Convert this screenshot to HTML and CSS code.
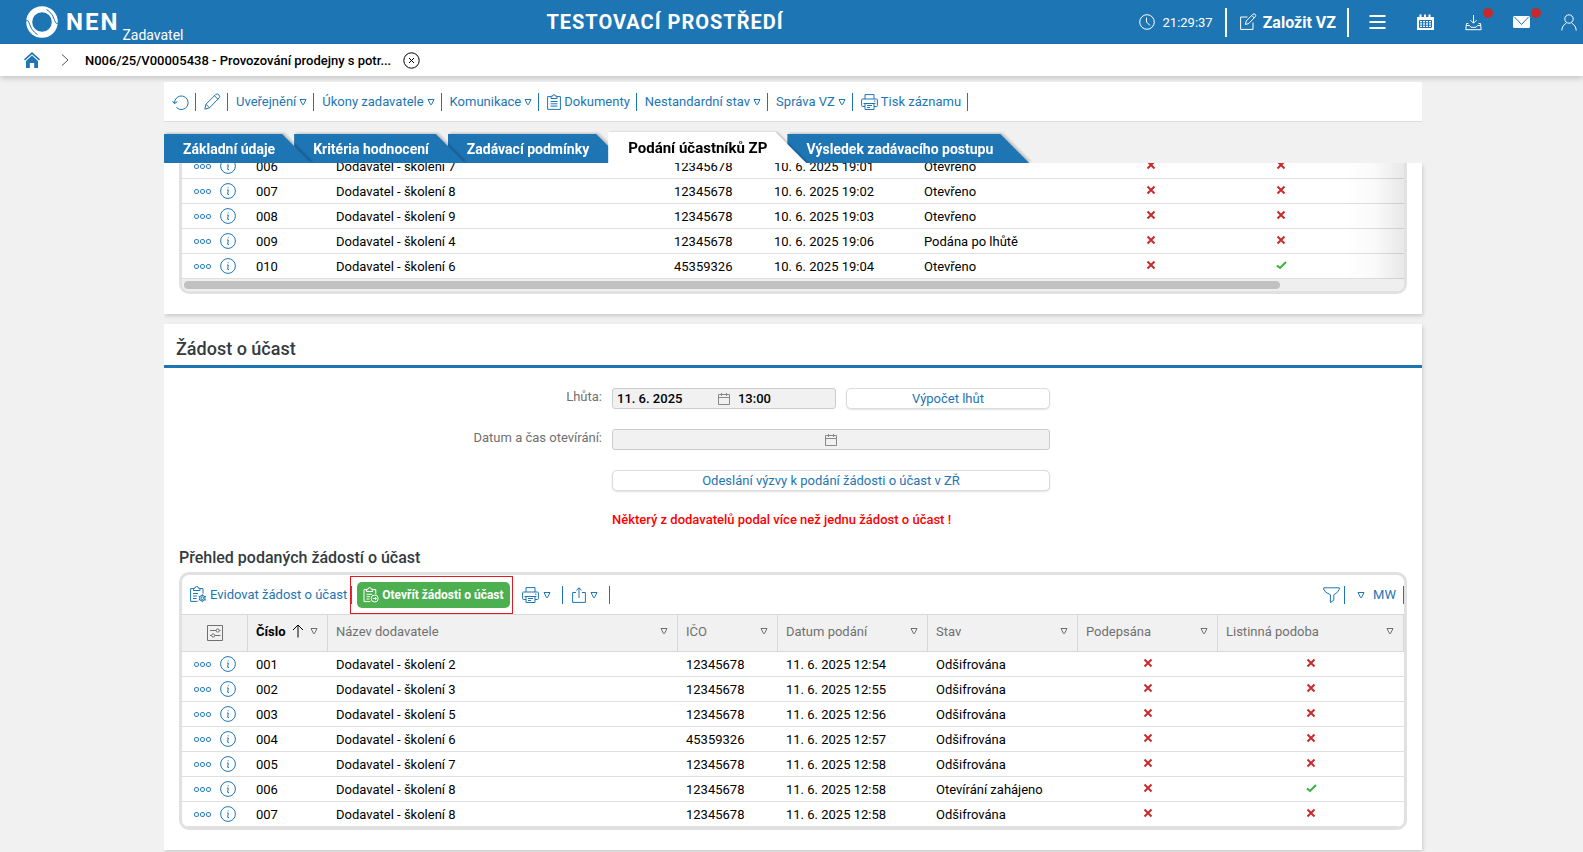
FILE: index.html
```html
<!DOCTYPE html>
<html lang="cs">
<head>
  <meta charset="UTF-8">
  <meta name="viewport" content="width=device-width, initial-scale=1.0">
  <title>NEN - Podání účastníků ZP</title>
  <link rel="stylesheet" href="styles.css">
</head>
<body>
  <!-- icons -->
  <svg class="sprite" aria-hidden="true">
    <symbol id="tri" viewBox="0 0 8 8"><path d="M1 1.500h6L4.500 6.500h-1z"/></symbol>
    <symbol id="dots" viewBox="0 0 17 5"><rect x=".6" y=".6" width="3.800" height="3.800" rx="1.200"/><rect x="6.600" y=".6" width="3.800" height="3.800" rx="1.200"/><rect x="12.600" y=".6" width="3.800" height="3.800" rx="1.200"/></symbol>
    <symbol id="info" viewBox="0 0 16 16"><circle cx="8" cy="8" r="7.4"/><path d="M7 7h1.3L7.6 11.2q.1.8 1.4.1M8.2 4.3v1"/></symbol>
    <symbol id="no" viewBox="0 0 10 10"><path d="M1.5 1.5l7 7M8.5 1.5l-7 7"/></symbol>
    <symbol id="yes" viewBox="0 0 11 10"><path d="M1 5.4l3 2.6 6-6"/></symbol>
    <symbol id="print" viewBox="0 0 17 16"><path d="M4 5V.6h9V5M4 12.500H1.600Q.6 12.500.6 11.500V6q0-1 1-1h13.800q1 0 1 1v5.500q0 1-1 1H13M4 9.500h9v6H4zM2.500 9.500h12M6 11.500h5M6 13.500h3M13 7.200h1.500"/></symbol>
    <symbol id="clip" viewBox="0 0 14 16"><path d="M4 2.600H.6v12.800h12.800V2.600H10M4 4.500V2.200h1.500a1.500 1.500 0 0 1 3 0H10v2.300zM3.500 7.500h7M3.500 9.800h7M3.500 12.100h7"/></symbol>
    <symbol id="cal" viewBox="0 0 12 12"><path d="M.5 1.500h11v10H.5zM.5 4.500h11M3.500 0v3M8.500 0v3"/></symbol>
  </svg>

  <header class="topbar">
    <a class="brand" href="#">
      <svg class="brand-mark" viewBox="0 0 32 32" aria-hidden="true">
        <circle class="ring" cx="16" cy="16" r="12.800"/>
        <path class="swoosh" d="M0 15C4 12 2 23 11.500 28.500M32 17C28 20 30 9 20.500 3.500"/>
      </svg>
      <span class="brand-name">NEN</span>
      <span class="brand-role">Zadavatel</span>
    </a>
    <div class="env">TESTOVACÍ PROSTŘEDÍ</div>
    <nav class="top-actions">
      <span class="clock">
        <svg width="16" height="16" viewBox="0 0 16 16"><circle cx="8" cy="8" r="7.300"/><path d="M7.500 3.500V8l3.500 3.500"/></svg>
        21:29:37
      </span>
      <a class="create" href="#">
        <svg width="18" height="18" viewBox="0 0 18 18"><path d="M8.500 4H1.600v12.400H14V9.500M6.500 11.500L7.200 8 14 1.200q1.200-.8 2.200.2t.2 2.200L9.800 10.500zM12.800 2.500l2.500 2.500"/></svg>
        Založit VZ
      </a>
      <button class="top-btn" aria-label="Menu"><svg width="17" height="16" viewBox="0 0 17 16"><path class="bars" d="M.500 2h16M.500 8h16M.500 14h16"/></svg></button>
      <button class="top-btn" aria-label="Kalendář"><svg width="17" height="17" viewBox="0 0 17 17"><path class="solid" d="M0 3h2.500V.5h2V3h2.500V.5h2V3h2.500V.5h2V3H17v13H0z"/><path class="grid" d="M2.500 6.500h12v7h-12zM2.500 8.800h12M2.500 11.200h12M5.500 6.500v7M8.500 6.500v7M11.500 6.500v7"/></svg></button>
      <button class="top-btn" aria-label="Stahování"><svg width="17" height="17" viewBox="0 0 17 17"><path d="M8.500 1v8M5.500 6.200l3 3 3-3M3.500 9.500H1.500L.8 15.700h15.400L15.500 9.500h-2M1 11.500h3.500L6 13.300h5l1.500-1.800H16"/></svg><i class="dot"></i></button>
      <button class="top-btn" aria-label="Zprávy"><svg width="17" height="12" viewBox="0 0 17 12"><rect class="solid" width="17" height="12" rx="1.500"/><path class="grid" d="M1.500 1l7 7.500 7-7.500"/></svg><i class="dot"></i></button>
      <button class="top-btn" aria-label="Uživatel"><svg width="16" height="17" viewBox="0 0 16 17"><circle cx="8" cy="5" r="4.200"/><path d="M.800 16.500q.2-5 4.500-7.300M15.200 16.500q-.2-5-4.500-7.300"/></svg></button>
    </nav>
  </header>

  <nav class="crumbs">
    <a href="#" aria-label="Domů"><svg width="16" height="16" viewBox="0 0 16 16"><path d="M8 0l8 7.300-1 1.100L8 2.200 1 8.400 0 7.300z"/><path d="M8 3.600l6 5.300V16h-3.800v-5H5.800v5H2V8.900z"/></svg></a>
    <svg class="chevron" width="8" height="12" viewBox="0 0 8 12"><path d="M1 .5L7 6l-6 5.500"/></svg>
    <span class="crumb">N006/25/V00005438 - Provozování prodejny s potr...</span>
    <button class="crumb-close" aria-label="Zavřít"><svg width="17" height="17" viewBox="0 0 17 17"><circle cx="8.500" cy="8.500" r="7.700"/><path d="M6 6l5 5M11 6l-5 5"/></svg></button>
  </nav>

  <main class="page">
    <div class="toolbar">
      <button class="tool" aria-label="Obnovit"><svg class="ico" width="17" height="16" viewBox="0 0 17 16"><path d="M2.600 9.500a6.800 6.800 0 1 1 1.900 4M.500 7l2 2.700L5.300 7.500"/></svg></button>
      <button class="tool" aria-label="Upravit"><svg class="ico" width="17" height="17" viewBox="0 0 17 17"><path d="M.800 16.200l1.200-5L11.800 1.400q1.400-1.200 3 .4t.4 3L5.500 14.800zM10.500 2.800l3.600 3.600M2 11.200l3.500 3.600"/></svg></button>
      <button class="tool">Uveřejnění <svg class="ico tri"><use href="#tri"/></svg></button>
      <button class="tool">Úkony zadavatele <svg class="ico tri"><use href="#tri"/></svg></button>
      <button class="tool">Komunikace <svg class="ico tri"><use href="#tri"/></svg></button>
      <button class="tool"><svg class="ico" width="14" height="16"><use href="#clip"/></svg> Dokumenty</button>
      <button class="tool">Nestandardní stav <svg class="ico tri"><use href="#tri"/></svg></button>
      <button class="tool">Správa VZ <svg class="ico tri"><use href="#tri"/></svg></button>
      <button class="tool"><svg class="ico" width="17" height="16"><use href="#print"/></svg> Tisk záznamu</button>
    </div>

    <nav class="tabs">
      <a class="tab" href="#"><span>Základní údaje</span></a>
      <a class="tab" href="#"><span>Kritéria hodnocení</span></a>
      <a class="tab" href="#"><span>Zadávací podmínky</span></a>
      <a class="tab active" href="#"><span>Podání účastníků ZP</span></a>
      <a class="tab" href="#"><span>Výsledek zadávacího postupu</span></a>
    </nav>

    <div class="content">
      <section class="panel scrolled">
        <div class="frame">
          <table class="data wide">
            <colgroup><col class="c-act"><col class="c-num"><col><col class="c-ico"><col class="c-date"><col class="c-state"><col class="c-flag"><col class="c-flag"><col class="c-rest"></colgroup>
            <tbody>
              <tr><td class="act"><svg class="ico dots"><use href="#dots"/></svg><svg class="ico info"><use href="#info"/></svg></td><td>006</td><td>Dodavatel - školení 7</td><td>12345678</td><td>10. 6. 2025 19:01</td><td>Otevřeno</td><td class="flag"><svg class="no"><use href="#no"/></svg></td><td class="flag"><svg class="no"><use href="#no"/></svg></td><td></td></tr>
              <tr><td class="act"><svg class="ico dots"><use href="#dots"/></svg><svg class="ico info"><use href="#info"/></svg></td><td>007</td><td>Dodavatel - školení 8</td><td>12345678</td><td>10. 6. 2025 19:02</td><td>Otevřeno</td><td class="flag"><svg class="no"><use href="#no"/></svg></td><td class="flag"><svg class="no"><use href="#no"/></svg></td><td></td></tr>
              <tr><td class="act"><svg class="ico dots"><use href="#dots"/></svg><svg class="ico info"><use href="#info"/></svg></td><td>008</td><td>Dodavatel - školení 9</td><td>12345678</td><td>10. 6. 2025 19:03</td><td>Otevřeno</td><td class="flag"><svg class="no"><use href="#no"/></svg></td><td class="flag"><svg class="no"><use href="#no"/></svg></td><td></td></tr>
              <tr><td class="act"><svg class="ico dots"><use href="#dots"/></svg><svg class="ico info"><use href="#info"/></svg></td><td>009</td><td>Dodavatel - školení 4</td><td>12345678</td><td>10. 6. 2025 19:06</td><td>Podána po lhůtě</td><td class="flag"><svg class="no"><use href="#no"/></svg></td><td class="flag"><svg class="no"><use href="#no"/></svg></td><td></td></tr>
              <tr><td class="act"><svg class="ico dots"><use href="#dots"/></svg><svg class="ico info"><use href="#info"/></svg></td><td>010</td><td>Dodavatel - školení 6</td><td>45359326</td><td>10. 6. 2025 19:04</td><td>Otevřeno</td><td class="flag"><svg class="no"><use href="#no"/></svg></td><td class="flag"><svg class="yes"><use href="#yes"/></svg></td><td></td></tr>
            </tbody>
          </table>
          <div class="fade"></div>
          <div class="hscroll"><div class="thumb"></div></div>
        </div>
      </section>

      <section class="panel">
        <h2>Žádost o účast</h2>
        <form class="form">
          <label for="deadline">Lhůta:</label>
          <div class="pair">
            <div class="datetime">
              <input id="deadline" type="text" value="11. 6. 2025" readonly>
              <svg class="cal"><use href="#cal"/></svg>
              <input type="text" value="13:00" aria-label="Čas lhůty" readonly>
            </div>
            <button type="button" class="btn">Výpočet lhůt</button>
          </div>

          <label for="opening">Datum a čas otevírání:</label>
          <div class="datetime">
            <input id="opening" type="text" readonly>
            <svg class="cal"><use href="#cal"/></svg>
            <input type="text" aria-label="Čas otevírání" readonly>
          </div>

          <button type="button" class="btn second">Odeslání výzvy k podání žádosti o účast v ZŘ</button>
          <p class="warning second">Některý z dodavatelů podal více než jednu žádost o účast !</p>
        </form>

        <h3>Přehled podaných žádostí o účast</h3>
        <div class="frame">
          <div class="table-tools">
            <button class="tool"><svg class="ico" width="17" height="17" viewBox="0 0 17 17"><path d="M3.500 2.600H.6v12.800h7M10 2.600h3v5M3.500 4.500V2.200H5a1.700 1.700 0 0 1 3.400 0H10v2.300zM3 7.500h5M3 10h4M3 12.500h3.500"/><circle cx="12.300" cy="12.200" r="1.400"/><path d="M12.300 8.200v1.400M12.300 14.800v1.400M8.600 10.200l1.400.8M14.600 13.400l1.500.8M8.600 14.200l1.400-.8M14.600 11l1.500-.8"/><circle cx="12.300" cy="12.200" r="2.800"/></svg> Evidovat žádost o účast</button>
            <div class="marked">
              <button class="open-btn"><svg width="16" height="16" viewBox="0 0 16 16"><path d="M3.500 2.600H1v12h6.500M9.500 2.600h3.300v4.600M3.500 4.500V2.200H5a1.600 1.600 0 0 1 3.200 0h1.500v2.300zM3.500 7.300h5.500M3.500 9.700h3.500M3.500 12h3"/><circle cx="11.700" cy="11.500" r="3.500"/><path d="M9.800 11.500h3.500M12 9.900l1.600 1.600-1.600 1.600"/></svg> Otevřít žádosti o účast</button>
            </div>
            <button class="tool" aria-label="Tisk"><svg class="ico" width="17" height="16"><use href="#print"/></svg><svg class="ico tri"><use href="#tri"/></svg></button>
            <button class="tool" aria-label="Export"><svg class="ico" width="14" height="16" viewBox="0 0 14 16"><path d="M4 5.500H.6v9.900h12.800V5.500H10M7 11V.800M4.300 3.500L7 .8l2.700 2.700"/></svg><svg class="ico tri"><use href="#tri"/></svg></button>
            <div class="tools-right">
              <button class="tool" aria-label="Filtr"><svg class="ico" width="17" height="16" viewBox="0 0 17 16"><path d="M.700.8h15.600v1.500q-1 3.200-5.500 5.500v5.400l-3.400 2.300V7.800Q1.700 5.500.7 2.300z"/></svg></button>
              <button class="tool view"><svg class="ico tri"><use href="#tri"/></svg> MW</button>
            </div>
          </div>
          <table class="data">
            <colgroup><col class="c-act"><col class="c-num"><col><col class="c-ico"><col class="c-date"><col class="c-date"><col class="c-sign"><col class="c-form"></colgroup>
            <thead>
              <tr>
                <th class="settings"><svg width="16" height="16" viewBox="0 0 16 16"><path d="M.500.5h15v15H.5zM3 5.500h6M12.500 5.500h1M3 10.500h1.500M8 10.500h5.500"/><circle cx="10.700" cy="5.500" r="1.600"/><circle cx="6.200" cy="10.500" r="1.600"/></svg></th>
                <th class="sorted"><div>Číslo <svg class="arrow" width="12" height="14" viewBox="0 0 12 14"><path d="M6 13.500V1M1 6l5-5 5 5"/></svg><svg class="tri"><use href="#tri"/></svg></div></th>
                <th><div>Název dodavatele <svg class="tri"><use href="#tri"/></svg></div></th>
                <th><div>IČO <svg class="tri"><use href="#tri"/></svg></div></th>
                <th><div>Datum podání <svg class="tri"><use href="#tri"/></svg></div></th>
                <th><div>Stav <svg class="tri"><use href="#tri"/></svg></div></th>
                <th><div>Podepsána <svg class="tri"><use href="#tri"/></svg></div></th>
                <th><div>Listinná podoba <svg class="tri"><use href="#tri"/></svg></div></th>
              </tr>
            </thead>
            <tbody>
              <tr><td class="act"><svg class="ico dots"><use href="#dots"/></svg><svg class="ico info"><use href="#info"/></svg></td><td>001</td><td>Dodavatel - školení 2</td><td>12345678</td><td>11. 6. 2025 12:54</td><td>Odšifrována</td><td class="flag"><svg class="no"><use href="#no"/></svg></td><td class="flag"><svg class="no"><use href="#no"/></svg></td></tr>
              <tr><td class="act"><svg class="ico dots"><use href="#dots"/></svg><svg class="ico info"><use href="#info"/></svg></td><td>002</td><td>Dodavatel - školení 3</td><td>12345678</td><td>11. 6. 2025 12:55</td><td>Odšifrována</td><td class="flag"><svg class="no"><use href="#no"/></svg></td><td class="flag"><svg class="no"><use href="#no"/></svg></td></tr>
              <tr><td class="act"><svg class="ico dots"><use href="#dots"/></svg><svg class="ico info"><use href="#info"/></svg></td><td>003</td><td>Dodavatel - školení 5</td><td>12345678</td><td>11. 6. 2025 12:56</td><td>Odšifrována</td><td class="flag"><svg class="no"><use href="#no"/></svg></td><td class="flag"><svg class="no"><use href="#no"/></svg></td></tr>
              <tr><td class="act"><svg class="ico dots"><use href="#dots"/></svg><svg class="ico info"><use href="#info"/></svg></td><td>004</td><td>Dodavatel - školení 6</td><td>45359326</td><td>11. 6. 2025 12:57</td><td>Odšifrována</td><td class="flag"><svg class="no"><use href="#no"/></svg></td><td class="flag"><svg class="no"><use href="#no"/></svg></td></tr>
              <tr><td class="act"><svg class="ico dots"><use href="#dots"/></svg><svg class="ico info"><use href="#info"/></svg></td><td>005</td><td>Dodavatel - školení 7</td><td>12345678</td><td>11. 6. 2025 12:58</td><td>Odšifrována</td><td class="flag"><svg class="no"><use href="#no"/></svg></td><td class="flag"><svg class="no"><use href="#no"/></svg></td></tr>
              <tr><td class="act"><svg class="ico dots"><use href="#dots"/></svg><svg class="ico info"><use href="#info"/></svg></td><td>006</td><td>Dodavatel - školení 8</td><td>12345678</td><td>11. 6. 2025 12:58</td><td>Otevírání zahájeno</td><td class="flag"><svg class="no"><use href="#no"/></svg></td><td class="flag"><svg class="yes"><use href="#yes"/></svg></td></tr>
              <tr><td class="act"><svg class="ico dots"><use href="#dots"/></svg><svg class="ico info"><use href="#info"/></svg></td><td>007</td><td>Dodavatel - školení 8</td><td>12345678</td><td>11. 6. 2025 12:58</td><td>Odšifrována</td><td class="flag"><svg class="no"><use href="#no"/></svg></td><td class="flag"><svg class="no"><use href="#no"/></svg></td></tr>
            </tbody>
          </table>
        </div>
      </section>
    </div>
  </main>
</body>
</html>
```
FILE: styles.css
```css
* {
  box-sizing: border-box;
}

body {
  margin: 0;
  height: 100vh;
  display: flex;
  flex-direction: column;
  overflow: hidden;
  font-family: Roboto, sans-serif;
  font-size: 13px;
  color: #000;
  background: #f1f1f1;
}

button {
  font: inherit;
  padding: 0;
  border: none;
  background: none;
  cursor: pointer;
}

a {
  color: inherit;
  text-decoration: none;
}

svg {
  fill: none;
  stroke: currentColor;
  flex: none;
}

.sprite {
  display: none;
}

.ico {
  color: #1e75b4;
}

.tri {
  width: 8px;
  height: 8px;
}

/* top bar */
.topbar {
  flex: none;
  display: flex;
  justify-content: space-between;
  align-items: center;
  height: 44px;
  padding: 0 2px 0 26px;
  color: #fff;
  background: #1e75b4;
}

.brand {
  display: flex;
  align-items: center;
  height: 44px;
  margin-right: 8px;
}

.brand-mark {
  width: 32px;
  height: 32px;
  margin-right: 8px;
}

.brand-mark .ring {
  stroke-width: 6;
}

.brand-mark .swoosh {
  stroke: #1e75b4;
}

.brand-name {
  font-size: 24px;
  font-weight: 700;
  letter-spacing: 2px;
}

.brand-role {
  align-self: flex-end;
  margin: 0 0 1px 3px;
  font-size: 14px;
  line-height: 16px;
}

.env {
  font-size: 20px;
  font-weight: 700;
  letter-spacing: 1px;
}

.top-actions {
  display: flex;
  align-items: center;
}

.clock {
  display: flex;
  align-items: center;
  gap: 8px;
  padding-right: 12px;
}

.create {
  display: flex;
  align-items: center;
  gap: 6px;
  height: 29px;
  padding: 0 11px 0 12px;
  font-size: 16px;
  font-weight: 700;
  border-left: 2px solid #fff;
  border-right: 2px solid #fff;
  margin-right: 4px;
}

.top-btn {
  position: relative;
  display: flex;
  align-items: center;
  justify-content: center;
  width: 48px;
  height: 44px;
  color: #fff;
}

.top-btn:last-child {
  width: 32px;
  margin-left: 4px;
  padding-left: 8px;
}

.top-btn .bars {
  stroke-width: 2;
}

.top-btn .solid {
  fill: #fff;
  stroke: none;
}

.top-btn .grid {
  stroke: #1e75b4;
}

.dot {
  position: absolute;
  top: 8px;
  right: 4px;
  width: 10px;
  height: 10px;
  border-radius: 50%;
  background: #c9292c;
}

/* breadcrumbs */
.crumbs {
  flex: none;
  display: flex;
  align-items: center;
  height: 32px;
  padding: 0 24px;
  background: #fff;
  box-shadow: 0 2px 6px rgba(0, 0, 0, 0.2);
}

.crumbs a svg {
  display: block;
  fill: #1e75b4;
  stroke: none;
}

.chevron {
  margin: 0 16px 0 21px;
  color: #555;
}

.crumb {
  font-weight: 500;
}

.crumb-close {
  margin-left: 12px;
  height: 17px;
}

/* page */
.page {
  flex: 1;
  min-height: 0;
  display: flex;
  flex-direction: column;
  padding: 6px 161px 0 164px;
}

.toolbar {
  flex: none;
  display: flex;
  align-items: center;
  height: 40px;
  background: #fff;
  border-bottom: 1px solid #dcdcdc;
}

.tool {
  display: flex;
  align-items: center;
  gap: 3px;
  height: 18px;
  padding: 0 6px 0 8px;
  color: #1e75b4;
  border-right: 1px solid #1e75b4;
}

/* tabs */
.tabs {
  flex: none;
  display: flex;
  align-items: flex-end;
  height: 41px;
}

.tab {
  position: relative;
  margin-right: -17px;
  font-size: 14px;
  font-weight: 700;
  color: #fff;
  filter: drop-shadow(2px -1px 1px rgba(0, 0, 0, 0.2));
}

.tab span {
  display: block;
  height: 29px;
  padding: 0 36px 0 19px;
  line-height: 30px;
  background: #1e75b4;
  clip-path: polygon(0 0, calc(100% - 29px) 0, 100% 100%, 0 100%);
}

.tab:nth-child(1) { z-index: 3; }
.tab:nth-child(2) { z-index: 2; }
.tab:nth-child(3) { z-index: 1; }

.tab.active {
  z-index: 4;
  margin-right: -19px;
  font-size: 15px;
  color: #000;
  filter: drop-shadow(2px 0 1px rgba(0, 0, 0, 0.2));
}

.tab.active span {
  height: 31px;
  padding: 0 39px 0 20px;
  line-height: 32px;
  background: #fff;
  clip-path: polygon(0 0, calc(100% - 31px) 0, 100% 100%, 0 100%);
}

/* panels */
.content {
  flex: 1;
  min-height: 0;
  margin-right: -8px;
  padding-right: 8px;
  overflow: hidden;
  position: relative;
  z-index: 5;
}

.panel {
  margin-bottom: 10px;
  padding-bottom: 20px;
  background: #fff;
  box-shadow: 1px 2px 4px rgba(0, 0, 0, 0.16);
}

.panel.scrolled .frame {
  border-top: none;
  border-radius: 0 0 10px 10px;
}

.panel.scrolled .data {
  margin-top: -9px;
}

.frame {
  position: relative;
  margin: 0 15px;
  border: 3px solid #dfe1e3;
  border-radius: 10px;
  overflow: hidden;
}

.fade {
  position: absolute;
  top: 0;
  right: 0;
  bottom: 12px;
  width: 60px;
  background: linear-gradient(to right, rgba(0, 0, 0, 0), rgba(0, 0, 0, 0.02) 50%, rgba(0, 0, 0, 0.09));
}

.hscroll {
  height: 12px;
  padding: 2px;
  background: #efefef;
}

.thumb {
  width: 90%;
  height: 8px;
  border-radius: 4px;
  background: #c1c1c1;
}

h2 {
  height: 44px;
  margin: 0;
  padding: 5px 12px 0;
  font-size: 18px;
  font-weight: 500;
  line-height: 40px;
  color: #333b41;
  border-bottom: 3px solid #1e75b4;
}

h3 {
  margin: 19px 15px 4px;
  font-size: 16px;
  font-weight: 500;
  line-height: 20px;
  color: #333b41;
}

/* form */
.form {
  display: grid;
  grid-template-columns: 438fr 438fr 362fr;
  gap: 20px 10px;
  padding-top: 20px;
}

.form label {
  grid-column: 1;
  text-align: right;
  line-height: 18px;
  color: #707070;
}

.second {
  grid-column: 2;
}

.pair {
  display: flex;
  gap: 10px;
}

.pair .datetime {
  flex: 224;
}

.pair .btn {
  flex: 204;
}

.datetime {
  display: flex;
  align-items: center;
  min-width: 0;
  height: 21px;
  background: #f1f1f1;
  border: 1px solid #ccc;
  border-radius: 3px;
}

.datetime input {
  flex: 1;
  min-width: 0;
  height: 19px;
  padding: 0 4px;
  font: inherit;
  font-weight: 500;
  border: none;
  outline: none;
  background: transparent;
}

.datetime .cal + input {
  padding: 0 0 0 8px;
}

.cal {
  width: 12px;
  height: 12px;
  color: #888;
}

.btn {
  height: 21px;
  color: #1e75b4;
  background: #fff;
  border: 1px solid #dcdcdc;
  border-radius: 5px;
  box-shadow: 0 1px 2px rgba(0, 0, 0, 0.12);
}

.warning {
  margin: 0;
  font-weight: 500;
  line-height: 18px;
  color: #f00;
}

/* table tools */
.table-tools {
  display: flex;
  align-items: center;
  height: 39px;
}

.table-tools .tool:first-child {
  padding-right: 4px;
}

.marked {
  display: flex;
  height: 38px;
  margin-left: -2px;
  padding: 5px 2px 5px 6px;
  border: 1px solid #e11b22;
}

.marked + .tool,
.marked + .tool + .tool {
  gap: 4px;
  padding: 0 11px 0 9px;
}

.open-btn {
  display: flex;
  align-items: center;
  gap: 3px;
  height: 26px;
  padding: 0 6px;
  font-size: 12px;
  font-weight: 700;
  color: #fff;
  background: #4caf50;
  border-radius: 5px;
}

.tools-right {
  display: flex;
  align-items: center;
  margin-left: auto;
}

.tool.view {
  gap: 8px;
  padding: 0 7px 0 12px;
}

/* data tables */
.data {
  width: 100%;
  table-layout: fixed;
  border-collapse: separate;
  border-spacing: 0;
}

.c-act { width: 66px; }
.c-num { width: 80px; }
.c-ico { width: 100px; }
.c-date { width: 150px; }
.c-state { width: 170px; }
.c-flag { width: 130px; }
.c-rest { width: 58px; }
.c-sign { width: 140px; }
.c-form { width: 186px; }

.data th {
  height: 38px;
  padding: 0 9px 4px 8px;
  font-weight: 400;
  text-align: left;
  color: #707070;
  background: #f1f1f1;
  border: 1px solid #d8d8d8;
  border-left: none;
}

.data th div {
  display: flex;
  align-items: center;
}

.data th .tri {
  margin-left: auto;
}

.data th.settings {
  padding: 0;
  text-align: center;
}

.settings svg {
  display: block;
  margin: auto;
}

.data th.sorted {
  font-weight: 700;
  color: #000;
}

.sorted .arrow {
  margin-left: 6px;
}

.sorted .tri {
  color: #707070;
}

.data td {
  height: 25px;
  padding: 2px 8px 0;
  line-height: 22px;
  border-bottom: 1px solid #dfdfdf;
}

.data .act {
  padding: 0 0 0 12px;
  line-height: 0;
  white-space: nowrap;
}

.act svg {
  vertical-align: middle;
}

.dots {
  width: 17px;
  height: 5px;
  margin-right: 9px;
}

.info {
  width: 16px;
  height: 16px;
}

.data .flag {
  padding: 0 0 3px;
  line-height: 0;
  text-align: center;
}

.no {
  width: 10px;
  height: 10px;
  color: #cb2a2d;
  stroke-width: 2;
}

.yes {
  width: 11px;
  height: 10px;
  color: #35b53a;
  stroke-width: 2;
}
```
